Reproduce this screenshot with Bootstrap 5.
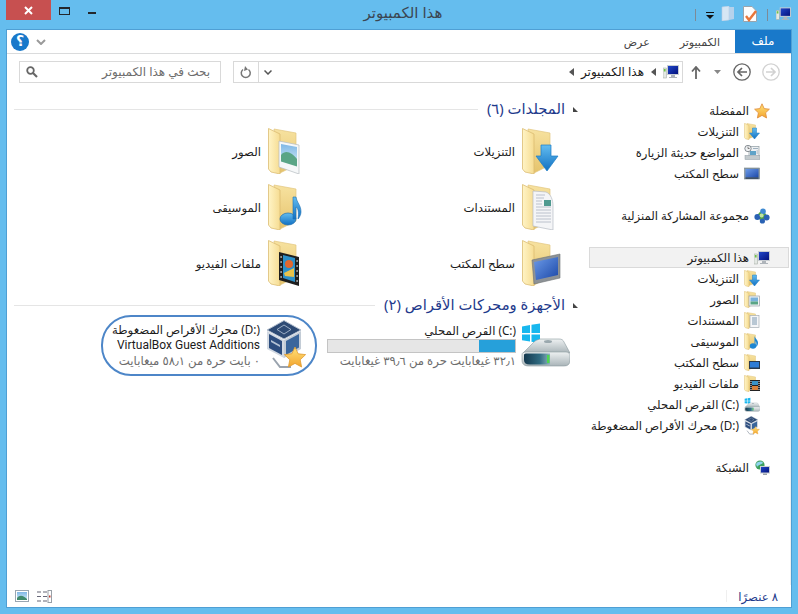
<!DOCTYPE html>
<html lang="ar">
<head>
<meta charset="utf-8">
<title>هذا الكمبيوتر</title>
<link href="https://cdn.jsdelivr.net/npm/bootstrap@5.3.0/dist/css/bootstrap.min.css" rel="stylesheet">
<style>
html,body{height:100%;margin:0}
body{background:#65bdee;font-family:"Noto Sans","DejaVu Sans",sans-serif;font-size:11.7px;color:#1b1b1b;overflow:hidden;line-height:1.2}
.defs-holder{display:block;width:0;height:0;overflow:hidden}
.svgi{display:block;flex:none}
.win-shell{width:798px;height:614px}
.cap-bar{height:29px}
.cap-left{width:111px;padding-left:6px}
.cap-right{width:103px;padding-top:6px}
.close-x{width:45px;height:20px;background:#c75050;color:#fff}
.cap-max{width:11px;height:8px;border:1px solid #23272c;border-top-width:2px;margin:7px 0 0 8px}
.cap-min{width:8px;height:2px;background:#23272c;margin:12px 0 0 18px}
.cap-title{font-size:15px;color:#3b4652;padding-top:3px}
.cap-sep{width:1px;height:12px;background:#7d8a96;margin-top:3px}
.work-panel{margin:0 6px 6px 6px;height:579px;background:#fff;border:1px solid #4f9fd4}
.tab-row{height:24px;border-bottom:1px solid #dadbdc}
.tab-file{width:56px;height:23px;background:#1979ca;color:#fff;font-size:12px}
.tab-plain{height:23px;color:#444;font-size:11px}
.help-dot{width:18px;height:18px;background:#1979ca;color:#fff;font-weight:700;font-size:14px;margin-left:4px}
.addr-row{height:36px;padding:7px 0 0 12px;font-size:12px}
.search-box{width:202px;height:22px;border:1px solid #d9d9d9;color:#6d6d6d;padding:0 10px 0 6px}
.addr-box{width:450px;height:22px;border:1px solid #d9d9d9;margin-left:12px}
.addr-refresh{width:25px;height:20px;border-right:1px solid #d9d9d9}
.addr-path{padding-right:3px;gap:7px;direction:rtl}
.tri-left{width:0;height:0;border-top:4px solid transparent;border-bottom:4px solid transparent;border-right:5px solid #555}
.nav-btns{height:22px;padding-left:8px}
.body-row{height:495px}
.main-area{width:581px;padding:9px 10px 0 7px}
.nav-pane{width:203px;border-right:1px solid #f0f0f0;padding-top:10px}
.sec-head{height:20px;gap:8px;color:#1e3a8c;font-size:14.8px}
.sec-tri{width:0;height:0;border-bottom:5px solid #444;border-right:5px solid transparent}
.sec-line{height:1px;background:#e5e5e5;margin-right:1px}
.folder-grid{display:grid;grid-template-columns:254px 254px;grid-auto-rows:46px;row-gap:10px;margin:9px 16px 9px 0}
.folder-tile{gap:7px}
.drive-row{margin-right:8px}
.drive-c{width:243px;gap:4px;height:61px}
.drive-d{width:216px;height:61px;border:2px solid #4d86c8;border-radius:30px;padding-right:9px;gap:6px;margin-right:10px}
.drive-lines{line-height:15.5px;white-space:nowrap}
.latin-line{font-family:Roboto,sans-serif;font-size:12px}
.used-bar{height:14px;width:189px;background:#e6e6e6;border:1px solid #c4c4c4;margin:1px 0 0}
.used-fill{width:36px;background:#26a0da}
.free-text{color:#6d6d6d}
.tree-row{height:21px;gap:5px;padding-right:20px;white-space:nowrap}
.tree-kid{padding-right:30px}
.tree-gap{height:21px}
.tree-on{background:#f2f2f2;border:1px solid #dadada;padding-right:18px;margin:0 1px}
.stat-row{height:22px;padding:0 13px 0 8px}
.stat-count{color:#1e3a8c}
.stat-sep{width:1px;height:12px;background:#efefef;margin-right:11px}
</style>
</head>
<body>
<svg class="defs-holder" xmlns="http://www.w3.org/2000/svg">
<defs>
<linearGradient id="gBack" x1="0" y1="0" x2="0" y2="1"><stop offset="0" stop-color="#f7e2a0"/><stop offset="1" stop-color="#e5c36c"/></linearGradient>
<linearGradient id="gFront" x1="0" y1="0" x2="1" y2="0"><stop offset="0" stop-color="#fff4c6"/><stop offset="1" stop-color="#f6dc92"/></linearGradient>
<linearGradient id="gBlue" x1="0" y1="0" x2="0" y2="1"><stop offset="0" stop-color="#63bdf0"/><stop offset="1" stop-color="#1170c2"/></linearGradient>
<linearGradient id="gScreen" x1="0" y1="0" x2="1" y2="1"><stop offset="0" stop-color="#6c9be8"/><stop offset="1" stop-color="#1c48a8"/></linearGradient>
<linearGradient id="gPc" x1="0" y1="0" x2="1" y2="1"><stop offset="0" stop-color="#2046c8"/><stop offset="1" stop-color="#04127e"/></linearGradient>
<linearGradient id="gStar" x1="0" y1="0" x2="0" y2="1"><stop offset="0" stop-color="#ffe27a"/><stop offset="1" stop-color="#f3a52e"/></linearGradient>
<linearGradient id="gSilver" x1="0" y1="0" x2="0" y2="1"><stop offset="0" stop-color="#eef1f2"/><stop offset="1" stop-color="#a9b4b8"/></linearGradient>
<linearGradient id="gGlass" x1="0" y1="0" x2="1" y2="0"><stop offset="0" stop-color="#14384e"/><stop offset=".6" stop-color="#2f6a80"/><stop offset="1" stop-color="#8db2bc"/></linearGradient>
<linearGradient id="gSky" x1="0" y1="0" x2="0" y2="1"><stop offset="0" stop-color="#7fb7e6"/><stop offset="1" stop-color="#d8eef8"/></linearGradient>

<symbol id="folder" viewBox="0 0 40 46">
<path d="M6 1 28 5V37L12 45Z" fill="url(#gBack)" stroke="#e2c67e" stroke-width=".7"/>
<path d="M.5 .5 12 6V46L3 44 .5 41Z" fill="url(#gFront)" stroke="#dcbd72" stroke-width=".8"/>
</symbol>

<symbol id="f-down" viewBox="0 0 40 46"><use href="#folder" width="40" height="46"/>
<path d="M19 17h10v11h7L25 43 14 28h5Z" fill="url(#gBlue)" stroke="#1b7cc6" stroke-width=".7"/></symbol>

<symbol id="f-pic" viewBox="0 0 40 46"><use href="#folder" width="40" height="46"/>
<path d="M11 13 31 17V46L11 39Z" fill="#f6f8f9" stroke="#b4bcc0" stroke-width=".7"/>
<path d="M13 16 29 19V38L13 33Z" fill="url(#gSky)"/>
<path d="M13 27C18 21 24 25 29 31V38.500L13 33.500Z" fill="#5aa586"/></symbol>

<symbol id="f-doc" viewBox="0 0 40 46"><use href="#folder" width="40" height="46"/>
<path d="M11 7 24 8C29 10 31 16 31 22V46L11 42Z" fill="#f4f5f7" stroke="#b6bcc4" stroke-width=".7"/>
<path d="M14 11H23M14 14H22M14 17H20M14 20H20M14 23H29M14 26H29M14 29H29M14 32H29M14 35H29M14 38H29" stroke="#b4bcc6" stroke-width=".9"/>
<rect x="22" y="16" width="7" height="6" fill="#4f9a90"/></symbol>

<symbol id="f-music" viewBox="0 0 40 46"><use href="#folder" width="40" height="46"/>
<ellipse cx="20" cy="35" rx="8" ry="6" fill="url(#gBlue)" stroke="#1b6eb4" stroke-width=".7"/>
<path d="M25 35V13H28C29 19 33 21 33 28 33 31 31 34 30 35 31 28 30 24 28 23V35Z" fill="url(#gBlue)" stroke="#1b6eb4" stroke-width=".6"/></symbol>

<symbol id="f-desk" viewBox="0 0 40 46"><use href="#folder" width="40" height="46"/>
<path d="M10 20 38 14V38L12 44Z" fill="#8d9296" stroke="#6d7276" stroke-width=".6"/>
<path d="M12 22 36 17V35L14 40Z" fill="url(#gScreen)"/></symbol>

<symbol id="f-film" viewBox="0 0 40 46"><use href="#folder" width="40" height="46"/>
<path d="M11 12 31 17V46L11 40Z" fill="#1e1e1e"/>
<path d="M15 15 27 18V42L15 38Z" fill="#2a8fc8"/>
<circle cx="21" cy="24" r="4" fill="#e2672e"/><path d="M16 33 26 28V37L17 36Z" fill="#e8c24a"/>
<path d="M12.500 17h1.200M12.500 22h1.200M12.500 27h1.200M12.500 32h1.200M12.500 37h1.200M28.500 21h1.200M28.500 26h1.200M28.500 31h1.200M28.500 36h1.200M28.500 41h1.200" stroke="#fff" stroke-width="1.600"/></symbol>

<symbol id="sm-folder" viewBox="0 0 16 17">
<path d="M3 .5 11.500 2V13L5 15.500Z" fill="url(#gBack)" stroke="#e2c67e" stroke-width=".5"/>
<path d="M.5 .3 5 2.300V16.700L1.500 15.800 .5 14.500Z" fill="url(#gFront)" stroke="#dcbd72" stroke-width=".5"/>
</symbol>
<symbol id="s-down" viewBox="0 0 16 17"><use href="#sm-folder" width="16" height="17"/><path d="M8.500 5h4v5h3l-5 6-5-6h3Z" fill="url(#gBlue)" stroke="#1b7cc6" stroke-width=".5"/></symbol>
<symbol id="s-pic" viewBox="0 0 16 17"><use href="#sm-folder" width="16" height="17"/><rect x="5" y="5" width="10.500" height="10" fill="#f2f4f5" stroke="#9aa2a8" stroke-width=".7"/><rect x="6.500" y="6.500" width="7.500" height="4" fill="#79b1dc"/><rect x="6.500" y="10.500" width="7.500" height="3" fill="#5aa586"/></symbol>
<symbol id="s-doc" viewBox="0 0 16 17"><use href="#sm-folder" width="16" height="17"/><rect x="6" y="3.500" width="9" height="12" fill="#f5f6f8" stroke="#a6aeb6" stroke-width=".7"/><path d="M8 6H13M8 8H13M8 10H13M8 12H13" stroke="#6f8fa8" stroke-width=".9"/></symbol>
<symbol id="s-music" viewBox="0 0 16 17"><use href="#sm-folder" width="16" height="17"/><ellipse cx="9" cy="13" rx="3.200" ry="2.800" fill="#1e86d2"/><path d="M10.500 13V3C11.500 6 14 7 14 10 14 12 13 13 12 14 12.500 11 12.500 9 11.500 8V13Z" fill="#1e86d2"/></symbol>
<symbol id="s-desk" viewBox="0 0 16 17"><use href="#sm-folder" width="16" height="17"/><rect x="5" y="7" width="11" height="8" fill="#2a3a4e"/><rect x="6" y="8" width="9" height="5.500" fill="#2e7cd6"/></symbol>
<symbol id="s-film" viewBox="0 0 16 17"><use href="#sm-folder" width="16" height="17"/><rect x="6" y="5" width="10" height="11" fill="#222"/><rect x="8" y="6" width="6" height="4" fill="#3a93c8"/><rect x="8" y="11" width="6" height="4" fill="#d9813a"/><path d="M7 6V16M15 6V16" stroke="#eee" stroke-width="1" stroke-dasharray="1 1"/></symbol>

<symbol id="pc" viewBox="0 0 16 16">
<rect x="0" y="4" width="3.500" height="10" fill="#e4e8e4" stroke="#9aa29a" stroke-width=".5"/><rect x=".8" y="5" width="1.800" height="2.500" fill="#6fc24a"/>
<rect x="4" y="1" width="12" height="10" fill="#c9ced3"/><rect x="5" y="2" width="10" height="8" fill="url(#gPc)"/>
<path d="M8 11h4v2h2v1H6v-1h2Z" fill="#aeb4ba"/></symbol>

<symbol id="star" viewBox="0 0 16 16"><path d="M8 .8 10.200 5.600 15.400 6.200 11.600 9.800 12.600 15 8 12.400 3.400 15 4.400 9.800 .6 6.200 5.800 5.600Z" fill="url(#gStar)" stroke="#e08a3a" stroke-width=".8"/></symbol>

<symbol id="recent" viewBox="0 0 16 16"><rect x="5" y="1.500" width="10" height="10" fill="#eef1f3" stroke="#8e9aa2" stroke-width=".7"/><rect x="1" y="10.500" width="15" height="4" fill="#c3cacd" stroke="#8e9aa2" stroke-width=".5"/><circle cx="4" cy="3.500" r="3.200" fill="#eef0f2" stroke="#6e767c" stroke-width=".8"/><path d="M4 1.600V3.500H5.600" stroke="#555" fill="none" stroke-width=".7"/><rect x="6" y="6" width="6" height="4" fill="#5fa3c8"/><path d="M9 3.500H14M12.500 6H14M12.500 8H14" stroke="#8aa0b0" stroke-width=".8"/></symbol>

<symbol id="desk" viewBox="0 0 16 16"><rect x=".5" y="2" width="15" height="11" fill="#8798a4" stroke="#728089" stroke-width=".6"/><rect x="1.500" y="3" width="13" height="8.500" fill="url(#gScreen)"/><rect x="1.500" y="11.500" width="13" height="1.200" fill="#26384e"/></symbol>

<symbol id="home" viewBox="0 0 16 16"><circle cx="8" cy="8" r="4.400" fill="#58aa3a"/><circle cx="3.400" cy="9" r="3" fill="#2a62b4"/><circle cx="12.600" cy="9.500" r="3" fill="#2a62b4"/><circle cx="9" cy="3.400" r="2.800" fill="#3f8ad2"/><circle cx="8.400" cy="13" r="2.600" fill="#2a62b4"/><circle cx="7.600" cy="7.600" r="2" fill="#bfe3a0"/></symbol>

<symbol id="net" viewBox="0 0 16 16"><circle cx="6" cy="5" r="4.600" fill="#3fa05c"/><path d="M2 4C4 1 8 1 9 3 7 5 5 4 3 7Z" fill="#8fd4ee"/><rect x="6" y="6" width="10" height="7.500" fill="#c9ced3"/><rect x="7" y="7" width="8" height="5.500" fill="url(#gPc)"/><path d="M9 13.500h4V15H9Z" fill="#9aa2a8"/></symbol>

<symbol id="disk" viewBox="0 0 50 48">
<path d="M2 4.500 10 3V11H2ZM11.500 2.800 20 1.500V11H11.500ZM2 12.500H10V19.500L2 18.300ZM11.500 12.500H20V21L11.500 19.700Z" fill="#18b7ee"/>
<path d="M3 31 14 20C15.500 18.500 17 18 20 17H39C42 17 43 18 44 20L50 31Z" fill="url(#gSilver)" stroke="#8b9aa0" stroke-width=".6"/>
<ellipse cx="28" cy="19.500" rx="4" ry="1.500" fill="#9aa8ae"/>
<path d="M2 33C2 31 3 30 6 30H46C49 30 50 32 50 34V38C50 42 48 44 44 44H9C4 44 2 42 2 38Z" fill="url(#gSilver)" stroke="#8b9aa0" stroke-width=".6"/>
<path d="M4 33C4 32 5 31.500 7 31.500H30V42.500H10C6 42.500 4 41 4 38Z" fill="url(#gGlass)"/>
<rect x="27" y="33" width="2.500" height="8" fill="#4ed650"/>
</symbol>

<symbol id="vbox" viewBox="0 0 40 52">
<path d="M7 38 14 47H25" fill="none" stroke="#9aa3ae" stroke-width="2"/>
<path d="M18 .5 35 10 18 19 1 10Z" fill="#2d4a74" stroke="#b7c2d0" stroke-width="1"/>
<path d="M18 5 25 9.500 18 14 11 9.500Z" fill="none" stroke="#b8c6d8" stroke-width=".8"/>
<path d="M1 11 18 20V38L1 29Z" fill="#d2d9e2"/>
<path d="M3 14 16 21V35L3 28Z" fill="#2d4d7e"/>
<path d="M5 20 14 25V27L5 22Z" fill="#b4c2d4"/>
<path d="M18 20 35 11V29L18 38Z" fill="#c3ccd6"/>
<path d="M20 21 33 14V27.500L20 35Z" fill="#3a669c"/>
<path d="M29 27 32.200 33.800 39.600 34.600 34.200 39.800 35.600 47 29 43.400 22.400 47 23.800 39.800 18.400 34.600 25.800 33.800Z" fill="url(#gStar)" stroke="#e09a30" stroke-width=".8"/>
</symbol>
</defs>
</svg>

<div class="win-shell">
  <div class="cap-bar d-flex">
    <div class="cap-left d-flex">
      <div class="close-x d-flex align-items-center justify-content-center">
        <svg class="svgi" width="9" height="9" viewBox="0 0 9 9"><path d="M1 1 8 8M8 1 1 8" stroke="#fff" stroke-width="2"/></svg>
      </div>
      <div class="cap-max"></div>
      <div class="cap-min"></div>
    </div>
    <div class="cap-title flex-grow-1 text-center" dir="rtl">هذا الكمبيوتر</div>
    <div class="cap-right d-flex">
      <span class="cap-sep"></span>
      <svg class="svgi" style="margin:4px 0 0 10px" width="8" height="10" viewBox="0 0 8 10"><path d="M0 2H8V3H0Z" fill="#111"/><path d="M0 5H8L4 9Z" fill="#111"/></svg>
      <svg class="svgi" style="margin:0 0 0 7px" width="14" height="15" viewBox="0 0 14 15"><path d="M1 1 8 0V14L1 15Z" fill="#d6e6f4" stroke="#b8cfe4" stroke-width=".6"/><path d="M8 1H13V13L8 14Z" fill="#b5d2ec"/></svg>
      <svg class="svgi" style="margin:0 0 0 8px" width="14" height="16" viewBox="0 0 14 16"><path d="M.5 .5H9L13.500 5V15.500H.5Z" fill="#fdfdfd" stroke="#9aa4ac"/><path d="M3 10 6 14 13 5" fill="none" stroke="#e8763a" stroke-width="2.400"/></svg>
      <span class="cap-sep" style="margin-left:10px"></span>
      <svg class="svgi" style="margin:0 0 0 8px" width="15" height="16"><use href="#pc" width="15" height="16"/></svg>
    </div>
  </div>

  <div class="work-panel">
    <div class="tab-row d-flex align-items-center">
      <div class="help-dot rounded-circle d-flex align-items-center justify-content-center">؟</div>
      <svg class="svgi" style="margin-left:7px" width="10" height="6" viewBox="0 0 10 6"><path d="M1 1 5 5 9 1" fill="none" stroke="#9a9a9a" stroke-width="2"/></svg>
      <div class="flex-grow-1"></div>
      <div class="tab-plain d-flex align-items-center" style="margin-right:30px">عرض</div>
      <div class="tab-plain d-flex align-items-center" style="margin-right:15px">الكمبيوتر</div>
      <div class="tab-file d-flex align-items-center justify-content-center">ملف</div>
    </div>

    <div class="addr-row d-flex">
      <div class="search-box d-flex align-items-center justify-content-between">
        <svg class="svgi" width="12" height="12" viewBox="0 0 12 12"><circle cx="4.500" cy="4.500" r="3.300" fill="none" stroke="#666" stroke-width="1.800"/><path d="M7 7 11 11" stroke="#666" stroke-width="2.200"/></svg>
        <span dir="rtl">بحث في هذا الكمبيوتر</span>
      </div>
      <div class="addr-box d-flex align-items-center">
        <div class="addr-refresh d-flex align-items-center justify-content-center">
          <svg class="svgi" width="12" height="13" viewBox="0 0 12 13"><path d="M3 3.500A4.500 4.500 0 1 0 8.500 3.500" fill="none" stroke="#777" stroke-width="1.500"/><path d="M5 0 8 3.400 4 5Z" fill="#777"/></svg>
        </div>
        <svg class="svgi" style="margin-left:5px" width="8" height="5" viewBox="0 0 8 5"><path d="M.5 .5 4 4 7.500 .5" fill="none" stroke="#555" stroke-width="1.500"/></svg>
        <div class="addr-path flex-grow-1 d-flex align-items-center">
          <svg class="svgi" width="16" height="16"><use href="#pc" width="16" height="16"/></svg>
          <span class="tri-left"></span>
          <span>هذا الكمبيوتر</span>
          <span class="tri-left"></span>
        </div>
      </div>
      <div class="nav-btns d-flex align-items-center">
        <svg class="svgi" width="10" height="13" viewBox="0 0 10 13"><path d="M5 13V2M1 5.500 5 1 9 5.500" fill="none" stroke="#666" stroke-width="1.800"/></svg>
        <svg class="svgi" style="margin-left:13px" width="7" height="4" viewBox="0 0 7 4"><path d="M0 0H7L3.500 4Z" fill="#888"/></svg>
        <svg class="svgi" style="margin-left:12px" width="18" height="18" viewBox="0 0 18 18"><circle cx="9" cy="9" r="8.200" fill="none" stroke="#666" stroke-width="1.300"/><path d="M14 9H5M9 5 5 9 9 13" fill="none" stroke="#666" stroke-width="1.700"/></svg>
        <svg class="svgi" style="margin-left:11px" width="18" height="18" viewBox="0 0 18 18"><circle cx="9" cy="9" r="8.200" fill="none" stroke="#d2d2d2" stroke-width="1.300"/><path d="M4 9H13M9 5 13 9 9 13" fill="none" stroke="#d2d2d2" stroke-width="1.700"/></svg>
      </div>
    </div>

    <div class="body-row d-flex">
      <div class="main-area" dir="rtl">
        <div class="sec-head d-flex align-items-center">
          <span class="sec-tri"></span><span>المجلدات (٦)</span><span class="sec-line flex-grow-1"></span>
        </div>
        <div class="folder-grid">
          <div class="folder-tile d-flex align-items-center"><svg class="svgi" width="40" height="46"><use href="#f-down" width="40" height="46"/></svg><span>التنزيلات</span></div>
          <div class="folder-tile d-flex align-items-center"><svg class="svgi" width="40" height="46"><use href="#f-pic" width="40" height="46"/></svg><span>الصور</span></div>
          <div class="folder-tile d-flex align-items-center"><svg class="svgi" width="40" height="46"><use href="#f-doc" width="40" height="46"/></svg><span>المستندات</span></div>
          <div class="folder-tile d-flex align-items-center"><svg class="svgi" width="40" height="46"><use href="#f-music" width="40" height="46"/></svg><span>الموسيقى</span></div>
          <div class="folder-tile d-flex align-items-center"><svg class="svgi" width="40" height="46"><use href="#f-desk" width="40" height="46"/></svg><span>سطح المكتب</span></div>
          <div class="folder-tile d-flex align-items-center"><svg class="svgi" width="40" height="46"><use href="#f-film" width="40" height="46"/></svg><span>ملفات الفيديو</span></div>
        </div>
        <div class="sec-head d-flex align-items-center">
          <span class="sec-tri"></span><span>الأجهزة ومحركات الأقراص (٢)</span><span class="sec-line flex-grow-1"></span>
        </div>
        <div class="drive-row d-flex">
          <div class="drive-c d-flex align-items-center">
            <svg class="svgi" width="50" height="48"><use href="#disk" width="50" height="48"/></svg>
            <div class="drive-lines">
              <div>(C:&lrm;) القرص المحلي</div>
              <div class="used-bar d-flex justify-content-start"><div class="used-fill"></div></div>
              <div class="free-text">٣٢٫١ غيغابايت حرة من ٣٩٫٦ غيغابايت</div>
            </div>
          </div>
          <div class="drive-d d-flex align-items-center">
            <svg class="svgi" width="40" height="52"><use href="#vbox" width="40" height="52"/></svg>
            <div class="drive-lines">
              <div>(D:&lrm;) محرك الأقراص المضغوطة</div>
              <div class="latin-line">VirtualBox Guest Additions</div>
              <div class="free-text">٠ بايت حرة من ٥٨٫١ ميغابايت</div>
            </div>
          </div>
        </div>
      </div>

      <div class="nav-pane" dir="rtl">
        <div class="tree-row d-flex align-items-center"><svg class="svgi" width="16" height="16"><use href="#star" width="16" height="16"/></svg><span>المفضلة</span></div>
        <div class="tree-row tree-kid d-flex align-items-center"><svg class="svgi" width="16" height="17"><use href="#s-down" width="16" height="17"/></svg><span>التنزيلات</span></div>
        <div class="tree-row tree-kid d-flex align-items-center"><svg class="svgi" width="16" height="16"><use href="#recent" width="16" height="16"/></svg><span>المواضع حديثة الزيارة</span></div>
        <div class="tree-row tree-kid d-flex align-items-center"><svg class="svgi" width="16" height="16"><use href="#desk" width="16" height="16"/></svg><span>سطح المكتب</span></div>
        <div class="tree-gap"></div>
        <div class="tree-row d-flex align-items-center"><svg class="svgi" width="16" height="16"><use href="#home" width="16" height="16"/></svg><span>مجموعة المشاركة المنزلية</span></div>
        <div class="tree-gap"></div>
        <div class="tree-row tree-on d-flex align-items-center"><svg class="svgi" width="16" height="16"><use href="#pc" width="16" height="16"/></svg><span>هذا الكمبيوتر</span></div>
        <div class="tree-row tree-kid d-flex align-items-center"><svg class="svgi" width="16" height="17"><use href="#s-down" width="16" height="17"/></svg><span>التنزيلات</span></div>
        <div class="tree-row tree-kid d-flex align-items-center"><svg class="svgi" width="16" height="17"><use href="#s-pic" width="16" height="17"/></svg><span>الصور</span></div>
        <div class="tree-row tree-kid d-flex align-items-center"><svg class="svgi" width="16" height="17"><use href="#s-doc" width="16" height="17"/></svg><span>المستندات</span></div>
        <div class="tree-row tree-kid d-flex align-items-center"><svg class="svgi" width="16" height="17"><use href="#s-music" width="16" height="17"/></svg><span>الموسيقى</span></div>
        <div class="tree-row tree-kid d-flex align-items-center"><svg class="svgi" width="16" height="17"><use href="#s-desk" width="16" height="17"/></svg><span>سطح المكتب</span></div>
        <div class="tree-row tree-kid d-flex align-items-center"><svg class="svgi" width="16" height="17"><use href="#s-film" width="16" height="17"/></svg><span>ملفات الفيديو</span></div>
        <div class="tree-row tree-kid d-flex align-items-center"><svg class="svgi" width="16" height="16"><use href="#disk" width="16" height="16"/></svg><span>(C:&lrm;) القرص المحلي</span></div>
        <div class="tree-row tree-kid d-flex align-items-center"><svg class="svgi" width="16" height="20"><use href="#vbox" width="16" height="20"/></svg><span>(D:&lrm;) محرك الأقراص المضغوطة</span></div>
        <div class="tree-gap"></div>
        <div class="tree-row d-flex align-items-center"><svg class="svgi" width="16" height="16"><use href="#net" width="16" height="16"/></svg><span>الشبكة</span></div>
      </div>
    </div>

    <div class="stat-row d-flex align-items-center">
      <svg class="svgi" width="14" height="12" viewBox="0 0 14 12"><rect x=".5" y=".5" width="13" height="11" fill="#fff" stroke="#9aa6b2"/><rect x="2" y="2" width="10" height="8" fill="url(#gSky)"/><path d="M2 8C5 4 9 6 12 9V10H2Z" fill="#3f8a6c"/></svg>
      <svg class="svgi" style="margin-left:8px" width="15" height="13" viewBox="0 0 15 13"><path d="M0 2H4M6 2H10M0 6.500H4M6 6.500H10M0 11H4M6 11H10" stroke="#667" stroke-width="1.200"/><rect x="11" y=".5" width="3.500" height="12" fill="#fff" stroke="#9aa0a8"/><rect x="12" y="5.500" width="1.500" height="2" fill="#c0392b"/></svg>
      <div class="flex-grow-1"></div>
      <span class="stat-sep"></span>
      <span class="stat-count" dir="rtl">٨ عنصرًا</span>
    </div>
  </div>
</div>
</body>
</html>
